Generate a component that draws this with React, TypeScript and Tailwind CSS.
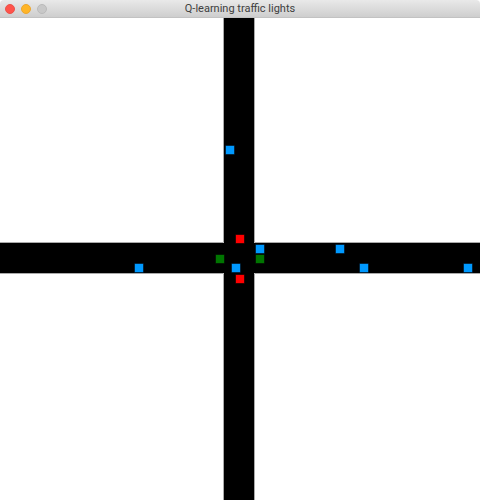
type Marker = { x: number; y: number };

const SIZE = 8;

const cars: Marker[] = [
  { x: 226, y: 128 },
  { x: 256, y: 227 },
  { x: 336, y: 227 },
  { x: 135, y: 246 },
  { x: 232, y: 246 },
  { x: 360, y: 246 },
  { x: 464, y: 246 },
];

const redLights: Marker[] = [
  { x: 236, y: 217 },
  { x: 236, y: 257 },
];

const greenLights: Marker[] = [
  { x: 216, y: 237 },
  { x: 256, y: 237 },
];

function Squares({ items, className }: { items: Marker[]; className: string }) {
  return (
    <g className={className} strokeWidth={1} paintOrder="stroke">
      {items.map((m) => (
        <rect key={`${m.x}-${m.y}`} x={m.x} y={m.y} width={SIZE} height={SIZE} />
      ))}
    </g>
  );
}

function TitleBar() {
  return (
    <header className="grid h-[18px] grid-cols-[1fr_auto_1fr] items-center border-b border-[#c2c2c2] bg-linear-to-b from-[#e9e9e9] to-[#cecece] px-[5px]">
      <div className="flex gap-1.5">
        <button type="button" aria-label="Close" className="size-2.5 rounded-full border border-[#e9534a] bg-[#ff534b]" />
        <button type="button" aria-label="Minimize" className="size-2.5 rounded-full border border-[#eba52f] bg-[#ffb527]" />
        <button type="button" aria-label="Zoom" disabled className="size-2.5 rounded-full border border-[#bababa] bg-[#c8c8c8]" />
      </div>
      <h1 className="font-[Roboto,sans-serif] text-[11px] leading-4 text-[#404040]">Q-learning traffic lights</h1>
    </header>
  );
}

function Intersection() {
  return (
    <svg viewBox="0 0 480 482" className="block w-full" role="img" aria-label="Intersection with cars and traffic lights">
      <path d="M223.5 0V224.5H0M254.5 0V224.5H480M223.5 482V255.5H0M254.5 482V255.5H480" fill="none" stroke="#aaa" />
      <path d="M224 0H254V225H480V255H254V482H224V255H0V225H224Z" fill="#000" />
      <Squares items={redLights} className="fill-[#ff0000] stroke-[#600000]" />
      <Squares items={greenLights} className="fill-[#007500] stroke-[#003000]" />
      <Squares items={cars} className="fill-[#0099ff] stroke-[#004a80]" />
    </svg>
  );
}

export default function App() {
  return (
    <main className="min-h-screen overflow-hidden rounded-t-sm bg-white">
      <TitleBar />
      <Intersection />
    </main>
  );
}
